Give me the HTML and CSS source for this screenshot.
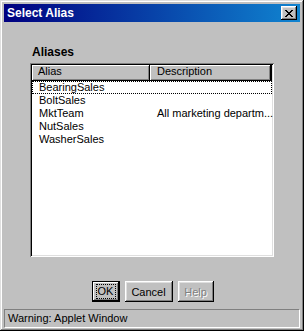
FILE: index.html
```html
<!DOCTYPE html>
<html lang="en">
<head>
    <meta charset="UTF-8">
    <title>Select Alias</title>
    <link rel="stylesheet" href="styles.css">
</head>
<body>
    <div class="window">
        <div class="titlebar">
            <span class="title">Select Alias</span>
            <button class="close">
                <svg width="8" height="7" viewBox="0 0 8 7" shape-rendering="crispEdges">
                    <path d="M0 0h2v1h-2z M6 0h2v1h-2z M1 1h2v1h-2z M5 1h2v1h-2z M2 2h4v1h-4z M3 3h2v1h-2z M2 4h4v1h-4z M1 5h2v1h-2z M5 5h2v1h-2z M0 6h2v1h-2z M6 6h2v1h-2z" fill="#000"/>
                </svg>
            </button>
        </div>

        <div class="content">
            <div class="label">Aliases</div>
            <div class="listview">
                <div class="lv-head">
                    <div class="col col-alias">Alias</div>
                    <div class="col col-desc">Description</div>
                </div>
                <div class="lv-row focused"><span class="c-alias">BearingSales</span><span class="c-desc"></span></div>
                <div class="lv-row"><span class="c-alias">BoltSales</span><span class="c-desc"></span></div>
                <div class="lv-row"><span class="c-alias">MktTeam</span><span class="c-desc">All marketing departm...</span></div>
                <div class="lv-row"><span class="c-alias">NutSales</span><span class="c-desc"></span></div>
                <div class="lv-row"><span class="c-alias">WasherSales</span><span class="c-desc"></span></div>
            </div>

            <!-- dialog buttons -->
            <div class="buttons">
                <button class="btn default btn-ok"><span class="focus">OK</span></button>
                <button class="btn btn-cancel">Cancel</button>
                <button class="btn btn-help" disabled>Help</button>
            </div>
        </div>

        <div class="statusbar">Warning: Applet Window</div>
    </div>
</body>
</html>
```

FILE: styles.css
```css
body {
    margin: 0;
    font-family: "Liberation Sans", Arial, sans-serif;
    font-size: 11px;
    color: #000;
}

.window {
    width: 304px;
    height: 331px;
    box-sizing: border-box;
    padding: 4px 4px 3px 4px;
    background-color: #c0c0c0;
    display: flex;
    flex-direction: column;
    box-shadow: inset -1px -1px #000, inset 1px 1px #dfdfdf,
                inset -2px -2px #808080, inset 2px 2px #fff;
}

.titlebar {
    height: 18px;
    display: flex;
    align-items: center;
    justify-content: space-between;
    padding: 0 3px 0 3px;
    background: linear-gradient(to right, #000080, #1084d0);
}

.title {
    color: #fff;
    font-weight: bold;
    font-size: 12px;
}

.close {
    width: 16px;
    height: 14px;
    padding: 0;
    border: none;
    background-color: #c0c0c0;
    display: flex;
    align-items: center;
    justify-content: center;
    box-shadow: inset -1px -1px #000, inset 1px 1px #fff,
                inset -2px -2px #808080, inset 2px 2px #dfdfdf;
}

.content {
    flex: 1;
    display: flex;
    flex-direction: column;
    padding: 23px 26px 0 26px;
}

.label {
    font-weight: bold;
    font-size: 12px;
    line-height: 14px;
    margin-left: 2px;
    margin-bottom: 4px;
}

.listview {
    width: 244px;
    height: 194px;
    flex-shrink: 0;
    box-sizing: border-box;
    padding: 2px 2px 2px 2px;
    background-color: #fff;
    box-shadow: inset 1px 1px #808080, inset -1px -1px #fff,
                inset 2px 2px #000, inset -2px -2px #dfdfdf;
}

.lv-head {
    display: flex;
    height: 16px;
}

.col {
    box-sizing: border-box;
    height: 16px;
    line-height: 13px;
    padding-left: 6px;
    background-color: #c0c0c0;
    box-shadow: inset -1px -1px #000, inset 1px 1px #fff,
                inset -2px -2px #808080;
}

.col-alias {
    width: 118px;
}

.col-desc {
    width: 122px;
    padding-left: 7px;
    box-shadow: inset -2px -1px #000, inset 1px 1px #fff,
                inset -3px -2px #808080;
}

.lv-row {
    display: flex;
    height: 13px;
    line-height: 13px;
    white-space: nowrap;
}

.lv-row.focused {
    outline: 1px dotted #000;
    outline-offset: -1px;
}

.c-alias {
    width: 118px;
    padding-left: 7px;
    box-sizing: border-box;
}

.c-desc {
    width: 122px;
    padding-left: 7px;
    box-sizing: border-box;
}

.buttons {
    display: flex;
    justify-content: center;
    gap: 5px;
    margin-top: 24px;
    margin-left: 1px;
}

.btn {
    height: 21px;
    flex-shrink: 0;
    padding: 0;
    border: none;
    font-family: "Liberation Sans", Arial, sans-serif;
    font-size: 11px;
    color: #000;
    background-color: #c0c0c0;
    box-shadow: inset -1px -1px #000, inset 1px 1px #fff,
                inset -2px -2px #808080, inset 2px 2px #dfdfdf;
}

.btn-ok {
    width: 28px;
    box-shadow: inset 0 0 0 1px #000, inset -2px -2px #000, inset 2px 2px #fff,
                inset -3px -3px #808080;
    display: flex;
    align-items: center;
    justify-content: center;
}

.focus {
    display: block;
    width: 18px;
    height: 13px;
    line-height: 13px;
    outline: 1px dotted #000;
}

.btn-cancel {
    width: 48px;
}

.btn-help {
    width: 36px;
    color: #808080;
    text-shadow: 1px 1px #fff;
}

.statusbar {
    height: 19px;
    flex-shrink: 0;
    line-height: 17px;
    box-sizing: border-box;
    padding-left: 3px;
    margin-top: 7px;
    border-top: 1px solid #808080;
    border-left: 1px solid #808080;
    border-bottom: 1px solid #fff;
    border-right: 1px solid #fff;
}
```
